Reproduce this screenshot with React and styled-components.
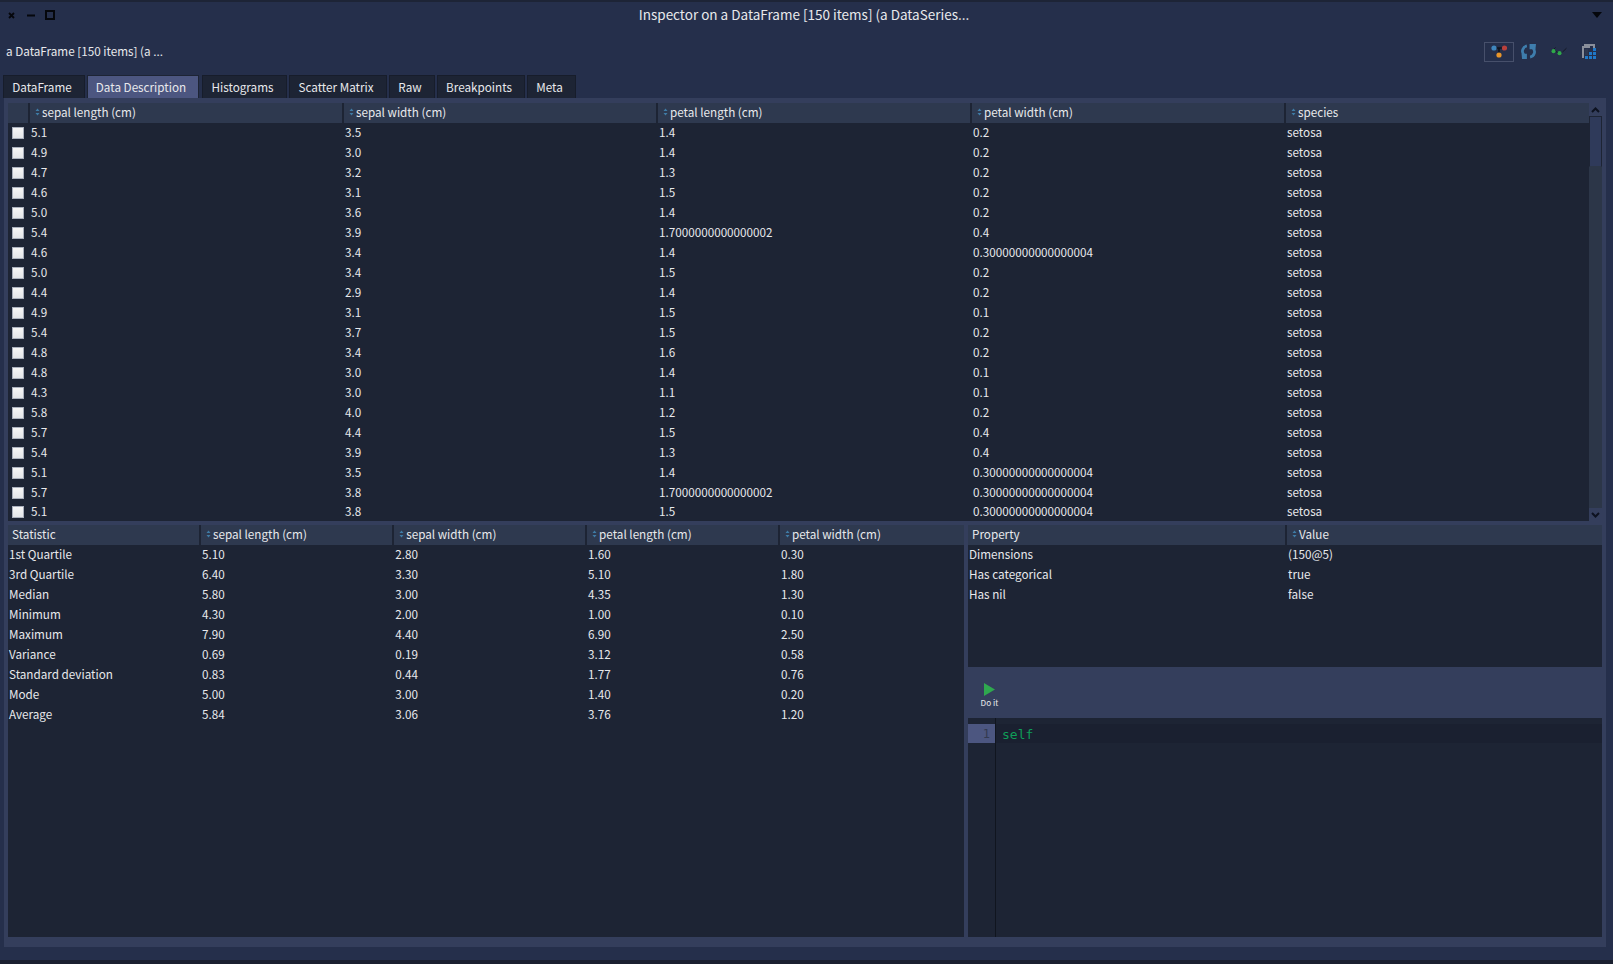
import React from 'react';
import styled, { createGlobalStyle } from 'styled-components';

const GlobalStyle = createGlobalStyle`
  html, body {
    margin: 0;
    padding: 0;
    background: #1a2030;
  }
  * {
    box-sizing: border-box;
  }
`;

const Window = styled.div`
  width: 1613px;
  height: 964px;
  overflow: hidden;
  display: flex;
  flex-direction: column;
  background: #252f4b;
  border-top: 2px solid #1d2436;
  border-bottom: 4px solid #1a2030;
  color: #e8e9ec;
  font-family: 'Noto Sans CJK SC', 'Source Sans Pro', 'Open Sans', sans-serif;
  font-size: 11.7px;
`;

const TitleBar = styled.div`
  height: 26px;
  flex: none;
  position: relative;
  display: flex;
  align-items: center;
  justify-content: center;
  padding: 0 5px 2px 0;
  font-size: 13.5px;
  line-height: 24px;
`;

const WindowControls = styled.div`
  position: absolute;
  left: 8px;
  top: 8px;
  display: flex;
  align-items: center;
`;

const ControlSlot = styled.div`
  display: flex;
  margin-right: ${(p) => p.$gap}px;
`;

const MenuArrow = styled.div`
  position: absolute;
  right: 11px;
  top: 10px;
  width: 0;
  height: 0;
  border-left: 5px solid transparent;
  border-right: 5px solid transparent;
  border-top: 6px solid #05070c;
`;

const Toolbar = styled.div`
  height: 47px;
  flex: none;
  display: flex;
  align-items: center;
  justify-content: space-between;
  padding: 0 17px 0 6px;
  font-size: 11.7px;
`;

const ToolbarLabel = styled.span`
  padding-bottom: 2px;
`;

const ToolIcons = styled.div`
  display: flex;
  align-items: center;
`;

const ToolButton = styled.div`
  height: 20px;
  width: ${(p) => p.$width}px;
  margin-left: ${(p) => p.$gap}px;
  display: flex;
  align-items: center;
  justify-content: center;
  border: ${(p) => (p.$boxed ? '1px solid #47506b' : 'none')};

  svg {
    flex: none;
  }
`;

const Tabs = styled.div`
  height: 23px;
  flex: none;
  display: flex;
  padding-left: 3px;
`;

const Tab = styled.div`
  width: ${(p) => p.$width}px;
  margin-right: ${(p) => p.$gap}px;
  padding-right: 4px;
  display: flex;
  align-items: center;
  justify-content: center;
  background: ${(p) => (p.$active ? '#4c5680' : '#1d2434')};
  border: 1px solid ${(p) => (p.$active ? '#1d2434' : '#171d2b')};
  border-bottom: none;
  font-size: 11.7px;
  line-height: 20px;
`;

const Panel = styled.div`
  width: 1602px;
  height: 849px;
  margin-left: 4px;
  flex: none;
  padding: 5px 4px 10px;
  background: #343e5c;
  display: flex;
  flex-direction: column;
  gap: 4px;
`;

const TopArea = styled.div`
  height: 418px;
  flex: none;
  display: flex;
  background: #1d2434;
`;

const TableBody = styled.div`
  flex: 1;
  min-width: 0;
  overflow: hidden;
  background: #1d2434;
`;

const Row = styled.div`
  display: grid;
  grid-template-columns: ${(p) => p.$columns};
  height: 20px;
  line-height: 18px;
  font-size: 11.7px;
  white-space: nowrap;
`;

const DataRow = styled(Row)`
  &:last-child {
    margin-top: -1px;
  }
`;

const HeaderRow = styled(Row)`
  background: #2e394f;
`;

const HeaderCell = styled.div`
  display: flex;
  align-items: center;
  gap: 2px;
  padding: 0 0 2px ${(p) => (p.$plain ? 4 : 5)}px;
  border-left: ${(p) => (p.$first ? 'none' : '2px solid #1d2434')};
`;

const Cell = styled.div`
  padding-left: ${(p) => (p.$first ? 1 : 3)}px;
`;

const CheckCell = styled.div`
  display: flex;
  align-items: center;
  padding-left: 4px;
`;

const CheckBox = styled.div`
  width: 12px;
  height: 12px;
  background: linear-gradient(#f6f6f6, #e4e6ea);
  border: 1px solid #aab0bd;
`;

const ScrollBar = styled.div`
  width: 13px;
  flex: none;
  display: flex;
  flex-direction: column;
  background: #2c3648;
`;

const ScrollButton = styled.div`
  height: 13px;
  flex: none;
  display: flex;
  align-items: center;
  justify-content: center;
  background: #343e5c;
`;

const ScrollTrack = styled.div`
  flex: 1;
  border-top: 1px solid #1d2434;
`;

const ScrollThumb = styled.div`
  height: 50px;
  background: #2f3a5a;
  border-left: 1px solid #1d2434;
  border-right: 1px solid #1d2434;
  border-bottom: 1px solid #2c3648;
`;

const BottomArea = styled.div`
  flex: 1;
  min-height: 0;
  display: flex;
  gap: 4px;
`;

const StatsPane = styled.div`
  width: 956px;
  flex: none;
  background: #1d2434;
`;

const SidePane = styled.div`
  flex: 1;
  min-width: 0;
  display: flex;
  flex-direction: column;
`;

const PropsPane = styled.div`
  height: 142px;
  flex: none;
  background: #1d2434;
`;

const DoItBar = styled.div`
  height: 51px;
  flex: none;
  display: flex;
  padding: 16px 0 0 13px;
  background: #343e5c;
`;

const DoItButton = styled.div`
  width: 17px;
  display: flex;
  flex-direction: column;
  align-items: center;
  font-size: 8.2px;
  line-height: 11px;
  white-space: nowrap;
  gap: 1px;
`;

const Editor = styled.div`
  flex: 1;
  min-height: 0;
  display: flex;
  background: #1d2434;
`;

const Gutter = styled.div`
  width: 28px;
  flex: none;
  padding-top: 6px;
  border-right: 1px solid #10151f;
`;

const LineNumber = styled.div`
  height: 19px;
  width: 27px;
  padding: 1px 5px 0 0;
  text-align: right;
  background: #4c5680;
  color: #333a4f;
  font-family: 'DejaVu Sans Mono', monospace;
  font-size: 12px;
  line-height: 19px;
`;

const CodeArea = styled.div`
  flex: 1;
  padding-top: 6px;
`;

const CodeLine = styled.div`
  height: 19px;
  padding: 1px 0 0 6px;
  background: #1a2030;
  color: #0f9d58;
  font-family: 'DejaVu Sans Mono', monospace;
  font-size: 13px;
  line-height: 19px;
`;

const SortIcon = () => (
  <svg width="5" height="8" viewBox="0 0 5 8">
    <path d="M2.5 0.5 L4.5 3 H0.5 Z M2.5 7.5 L4.5 5 H0.5 Z" fill="#3f7ca6" />
  </svg>
);

const ChevronIcon = ({ up }) => (
  <svg width="9" height="6" viewBox="0 0 9 6">
    <path
      d={up ? 'M1 5 L4.5 1.5 L8 5' : 'M1 1 L4.5 4.5 L8 1'}
      fill="none"
      stroke="#0d1220"
      strokeWidth="2"
    />
  </svg>
);

const ControlIcons = () => (
  <WindowControls>
    <ControlSlot $gap={12}>
      <svg width="7" height="7" viewBox="0 0 7 7">
        <path d="M1 1 L6 6 M6 1 L1 6" stroke="#05070c" strokeWidth="1.8" />
      </svg>
    </ControlSlot>
    <ControlSlot $gap={10}>
      <svg width="8" height="7" viewBox="0 0 8 7">
        <path d="M0 3.5 H8" stroke="#05070c" strokeWidth="2" />
      </svg>
    </ControlSlot>
    <svg width="10" height="10" viewBox="0 0 10 10">
      <rect x="1" y="1" width="8" height="8" fill="none" stroke="#05070c" strokeWidth="2" />
    </svg>
  </WindowControls>
);

const GraphIcon = () => (
  <svg width="16" height="13" viewBox="0 0 16 13">
    <path d="M3 3 H13 M8 3 V10" stroke="#10131c" strokeWidth="1.6" />
    <circle cx="3" cy="3" r="2.6" fill="#3f86bd" />
    <circle cx="13.5" cy="3" r="2.6" fill="#b8403c" />
    <circle cx="8" cy="10" r="2.6" fill="#e8952a" />
  </svg>
);

const RefreshIcon = () => (
  <svg width="15" height="15" viewBox="0 0 14 14">
    <path d="M5.5 1.8 A5 5 0 0 0 2.6 10" fill="none" stroke="#3e7dac" strokeWidth="2.6" />
    <path d="M0.5 9 H5.5 V14 H1 Z" fill="#3e7dac" />
    <path d="M8.5 12.2 A5 5 0 0 0 11.4 4" fill="none" stroke="#3e7dac" strokeWidth="2.6" />
    <path d="M8 0 H14 L13.5 5 H8 Z" fill="#3e7dac" />
  </svg>
);

const GlassesIcon = () => (
  <svg width="17" height="9" viewBox="0 0 17 9">
    <path d="M2 3 L4.5 0.5 M4 3.6 L7 6 M8 6 L10 5 M11.5 5 L15.5 1.2" stroke="#141824" strokeWidth="1" fill="none" />
    <ellipse cx="2.5" cy="4.2" rx="2" ry="2.1" fill="#2fa84a" />
    <ellipse cx="8.5" cy="6.2" rx="2" ry="2.1" fill="#2fa84a" />
  </svg>
);

const TableIcon = () => (
  <svg width="14" height="15" viewBox="0 0 14 15">
    <path d="M2 0 H13 V4 H11 V2 H2 Z" fill="#8a8f9b" />
    <path d="M0 2 H8 V4 H2 V14 H0 Z" fill="#8a8f9b" />
    <path d="M3 6 H6 M3 8 H6 M3 10 H6" stroke="#3b4256" strokeWidth="1" />
    <path
      d="M11 4 H14 V7 H11 Z M7 8 H10 V11 H7 Z M11 8 H14 V11 H11 Z M3 12 H6 V15 H3 Z M7 12 H10 V15 H7 Z M11 12 H14 V15 H11 Z"
      fill="#1f78c8"
    />
  </svg>
);

const PlayIcon = () => (
  <svg width="11" height="13" viewBox="0 0 11 13">
    <path d="M0 0 L11 6.5 L0 13 Z" fill="#2fa84f" />
  </svg>
);

const tabs = [
  { label: 'DataFrame', width: 82, gap: 2 },
  { label: 'Data Description', width: 112, gap: 3, active: true },
  { label: 'Histograms', width: 85, gap: 2 },
  { label: 'Scatter Matrix', width: 98, gap: 2 },
  { label: 'Raw', width: 46, gap: 2 },
  { label: 'Breakpoints', width: 88, gap: 2 },
  { label: 'Meta', width: 49, gap: 0 },
];

const iris = [
  ['5.1', '3.5', '1.4', '0.2'],
  ['4.9', '3.0', '1.4', '0.2'],
  ['4.7', '3.2', '1.3', '0.2'],
  ['4.6', '3.1', '1.5', '0.2'],
  ['5.0', '3.6', '1.4', '0.2'],
  ['5.4', '3.9', '1.7000000000000002', '0.4'],
  ['4.6', '3.4', '1.4', '0.30000000000000004'],
  ['5.0', '3.4', '1.5', '0.2'],
  ['4.4', '2.9', '1.4', '0.2'],
  ['4.9', '3.1', '1.5', '0.1'],
  ['5.4', '3.7', '1.5', '0.2'],
  ['4.8', '3.4', '1.6', '0.2'],
  ['4.8', '3.0', '1.4', '0.1'],
  ['4.3', '3.0', '1.1', '0.1'],
  ['5.8', '4.0', '1.2', '0.2'],
  ['5.7', '4.4', '1.5', '0.4'],
  ['5.4', '3.9', '1.3', '0.4'],
  ['5.1', '3.5', '1.4', '0.30000000000000004'],
  ['5.7', '3.8', '1.7000000000000002', '0.30000000000000004'],
  ['5.1', '3.8', '1.5', '0.30000000000000004'],
];

const stats = [
  ['1st Quartile', '5.10', '2.80', '1.60', '0.30'],
  ['3rd Quartile', '6.40', '3.30', '5.10', '1.80'],
  ['Median', '5.80', '3.00', '4.35', '1.30'],
  ['Minimum', '4.30', '2.00', '1.00', '0.10'],
  ['Maximum', '7.90', '4.40', '6.90', '2.50'],
  ['Variance', '0.69', '0.19', '3.12', '0.58'],
  ['Standard deviation', '0.83', '0.44', '1.77', '0.76'],
  ['Mode', '5.00', '3.00', '1.40', '0.20'],
  ['Average', '5.84', '3.06', '3.76', '1.20'],
];

const properties = [
  ['Dimensions', '(150@5)'],
  ['Has categorical', 'true'],
  ['Has nil', 'false'],
];

const topColumns = '20px repeat(4, 314px) 1fr';
const statColumns = '191px 193.2px 192.9px 192.9px 1fr';
const propColumns = '317px 1fr';

const measures = ['sepal length (cm)', 'sepal width (cm)', 'petal length (cm)', 'petal width (cm)'];

const SortedHeader = ({ label }) => (
  <HeaderCell>
    <SortIcon />
    {label}
  </HeaderCell>
);

const App = () => {
  return (
    <Window>
      <GlobalStyle />
      <TitleBar>
        <ControlIcons />
        Inspector on a DataFrame [150 items] (a DataSeries...
        <MenuArrow />
      </TitleBar>
      <Toolbar>
        <ToolbarLabel>a DataFrame [150 items] (a ...</ToolbarLabel>
        <ToolIcons>
          <ToolButton $boxed $width={30} $gap={0}>
            <GraphIcon />
          </ToolButton>
          <ToolButton $width={16} $gap={6}>
            <RefreshIcon />
          </ToolButton>
          <ToolButton $width={17} $gap={15}>
            <GlassesIcon />
          </ToolButton>
          <ToolButton $width={14} $gap={14}>
            <TableIcon />
          </ToolButton>
        </ToolIcons>
      </Toolbar>
      <Tabs>
        {tabs.map((tab) => (
          <Tab key={tab.label} $width={tab.width} $gap={tab.gap} $active={tab.active}>
            {tab.label}
          </Tab>
        ))}
      </Tabs>
      <Panel>
        <TopArea>
          <TableBody>
            <HeaderRow $columns={topColumns}>
              <HeaderCell $first />
              {measures.map((m) => (
                <SortedHeader key={m} label={m} />
              ))}
              <SortedHeader label="species" />
            </HeaderRow>
            {iris.map((row, index) => (
              <DataRow key={index} $columns={topColumns}>
                <CheckCell>
                  <CheckBox />
                </CheckCell>
                {row.map((value, i) => (
                  <Cell key={i}>{value}</Cell>
                ))}
                <Cell>setosa</Cell>
              </DataRow>
            ))}
          </TableBody>
          <ScrollBar>
            <ScrollButton>
              <ChevronIcon up />
            </ScrollButton>
            <ScrollTrack>
              <ScrollThumb />
            </ScrollTrack>
            <ScrollButton>
              <ChevronIcon />
            </ScrollButton>
          </ScrollBar>
        </TopArea>
        <BottomArea>
          <StatsPane>
            <HeaderRow $columns={statColumns}>
              <HeaderCell $first $plain>
                Statistic
              </HeaderCell>
              {measures.map((m) => (
                <SortedHeader key={m} label={m} />
              ))}
            </HeaderRow>
            {stats.map((row) => (
              <Row key={row[0]} $columns={statColumns}>
                {row.map((value, i) => (
                  <Cell key={i} $first={i === 0}>
                    {value}
                  </Cell>
                ))}
              </Row>
            ))}
          </StatsPane>
          <SidePane>
            <PropsPane>
              <HeaderRow $columns={propColumns}>
                <HeaderCell $first $plain>
                  Property
                </HeaderCell>
                <SortedHeader label="Value" />
              </HeaderRow>
              {properties.map((row) => (
                <Row key={row[0]} $columns={propColumns}>
                  {row.map((value, i) => (
                    <Cell key={i} $first={i === 0}>
                      {value}
                    </Cell>
                  ))}
                </Row>
              ))}
            </PropsPane>
            <DoItBar>
              <DoItButton>
                <PlayIcon />
                <span>Do it</span>
              </DoItButton>
            </DoItBar>
            <Editor>
              <Gutter>
                <LineNumber>1</LineNumber>
              </Gutter>
              <CodeArea>
                <CodeLine>self</CodeLine>
              </CodeArea>
            </Editor>
          </SidePane>
        </BottomArea>
      </Panel>
    </Window>
  );
};

export default App;
